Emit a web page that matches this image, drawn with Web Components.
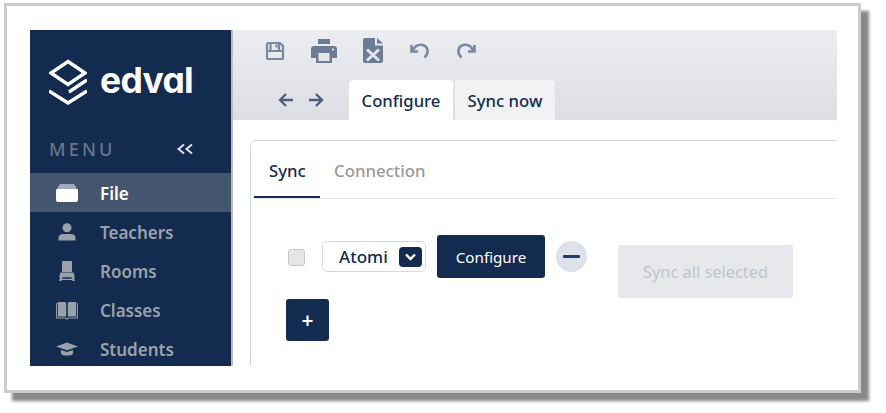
<!DOCTYPE html>
<html><head><meta charset="utf-8">
<style>
html,body{margin:0;padding:0;background:#fff}
body{width:886px;height:413px;overflow:visible;font-family:"Noto Sans","Open Sans",sans-serif;color:#132b4f}
</style></head><body>
<shot-frame>
  <app-sidebar>
    <nav-item active label="File"><svg viewBox="0 0 24 20" width="24" height="20" fill="#fff"><path d="M3 3.600h18v1H3zM4.500 1.400h15v1.200h-15zM1 7.500Q1 5.600 3 5.600h18q2 0 2 1.900v9.500q0 2-2 2H3q-2 0-2-2z"/></svg></nav-item>
    <nav-item label="Teachers"><svg viewBox="0 0 24 20" width="24" height="20" fill="#9aa1ab"><circle cx="12" cy="5.800" r="4.500"/><path d="M3.500 18.500v-2.300q0-4.200 5-4.200h7q5 0 5 4.200v2.300z"/></svg></nav-item>
    <nav-item label="Rooms"><svg viewBox="0 0 24 20" width="24" height="20" fill="#9aa1ab"><path d="M8 0h8q1 0 1 1v10H7V1q0-1 1-1zM5.500 11.500h13l1.500 4.700H4zM5 16h2.600l-1.200 4.500H4zM16.400 16H19l1 4.500h-2.400zM6.500 17.800h11V19h-11z"/></svg></nav-item>
    <nav-item label="Classes"><svg viewBox="0 0 24 20" width="24" height="20" fill="#9aa1ab"><path d="M2.800 2h6.700q1.700 0 1.700 1.500V16.500H2.800zM12.800 3.500Q12.800 2 14.500 2h6.700v14.500h-8.400zM1 3h.9v14.600H10q1 0 2 .7 1-.7 2-.7h8.100V3h.9v15.500H14q-1 0-1.200.9h-1.600q-.2-.9-1.200-.9H1z"/></svg></nav-item>
    <nav-item label="Students"><svg viewBox="0 0 24 20" width="24" height="20" fill="#9aa1ab"><path d="M12 3.500 23 7.500 12 11.300 1 7.500zM6 11l6 2.100 6-2.100v3.200c0 1.500-2.700 2.400-6 2.400s-6-.9-6-2.400z"/></svg></nav-item>
  </app-sidebar>
  <app-main>
    <app-toolbar></app-toolbar>
    <sync-card></sync-card>
  </app-main>
</shot-frame>
<script>
function def(name,html){customElements.define(name,class extends HTMLElement{constructor(){super();this.attachShadow({mode:'open'}).innerHTML=typeof html==='function'?html(this):html;}})}

def('shot-frame',`<style>:host{display:block;padding:3px 0 0 4px}
.frame{box-sizing:border-box;width:857px;height:390px;border:3px solid #ccc;background:#fff;padding:24px 21px 24px 23px;box-shadow:8px 8px 3px 0 #888888}
.app{display:flex;width:807px;height:336px;overflow:hidden}</style><div class="frame"><div class="app"><slot></slot></div></div>`);

def('app-sidebar',`<style>:host{display:block;flex:none;box-sizing:content-box;width:201px;height:336px;background:#132b4f;border-right:2px solid #b9bcc4;font-family:"Noto Sans",sans-serif}
.logo{display:flex;align-items:center;height:103px;padding-left:19px;box-sizing:border-box}
.word{font:700 35.500px/1 Inter,sans-serif;font-feature-settings:"cv11";color:#fff;margin-left:13px;letter-spacing:-.7px;margin-top:-2px}
.menu{display:flex;align-items:center;justify-content:space-between;height:32px;margin-bottom:8px;padding:0 38px 0 19px}
.menu span{font-size:18px;letter-spacing:3.2px;color:#68768c;font-weight:500}
</style>
<div class="logo"><svg width="38" height="46" viewBox="0 0 38 46" fill="none" stroke="#fff" stroke-width="3.400">
<path d="M19 2.500 36 14 19 25.500 2 14z"/><path d="M38 21 20 33M0 32l19 12 19-12"/></svg><span class="word">edval</span></div>
<div class="menu"><span>MENU</span><svg width="16" height="12" viewBox="0 0 16 12" fill="none" stroke="#dfe3e9" stroke-width="2"><path d="M7 1.500 1.500 6 7 10.500M15 1.500 9.500 6l5.500 4.500"/></svg></div>
<slot></slot>`);

def('nav-item',h=>`<style>:host{display:flex;align-items:center;height:39px;padding-left:25px;font-weight:600;font-size:17px;color:#9aa1ab}
:host([active]){background:#44566f;color:#fff}
.i{width:24px;height:20px;margin-right:21px;display:flex}
span{padding-top:2px}
</style><div class="i"><slot></slot></div><span>${h.getAttribute('label')}</span>`);

def('app-main',`<style>:host{display:block;flex:1;min-width:0;background:#fff}</style><slot></slot>`);

const IC='#6d7c95';
def('app-toolbar',`<style>:host{display:flex;flex-direction:column;justify-content:space-between;height:90px;background:linear-gradient(#ecedf1,#dcdee3);box-sizing:border-box}
.top{display:flex;align-items:center;height:41px;padding-left:32px}
.top svg{display:block;flex:none}
.bot{display:flex;align-items:flex-end;height:40px}
.arrows{display:flex;gap:14px;width:116px;padding-left:45px;box-sizing:border-box;align-items:center;align-self:center;flex:none}
.tab{height:40px;display:flex;align-items:center;justify-content:center;border-radius:4px 4px 0 0;font-size:16.700px;font-weight:500;color:#132b4f;box-sizing:border-box}
.a{width:104px;background:#fff;margin-right:2px}.b{width:100px;background:#f0f2f3}
</style>
<div class="top">
<svg style="margin-right:26px" width="20" height="20" viewBox="0 0 20 20" fill="none" stroke="#7a88a0" stroke-width="2.200"><path d="M2 3.500Q2 2 3.500 2H15l3 3v11.500q0 1.500-1.500 1.500h-13Q2 18 2 16.500z"/><path d="M2 10h16M5.500 2v8M14 2v8"/><path d="M11.500 3.500v3"/></svg>
<svg style="margin-right:26px" width="26" height="24" viewBox="0 0 26 24" fill="${IC}"><path d="M7 0h12v5H7zM3 7h20q3 0 3 3v9h-5v5H5v-5H0v-9q0-3 3-3z"/><path fill="#e4e6ea" d="M7.500 14h11v8h-11z"/><circle cx="22" cy="10.500" r="1.100" fill="#e4e6ea"/></svg>
<svg style="margin-right:27px" width="20" height="25" viewBox="0 0 20 25"><path fill="${IC}" d="M2 0h10v7.500h8V23q0 2-2 2H2q-2 0-2-2V2q0-2 2-2zM14 0l6 5.500h-6z"/><path stroke="#e4e6ea" stroke-width="3" d="M4 11.500l12 11M16 11.500l-12 11" fill="none"/></svg>
<svg style="margin-right:26px" width="20" height="16" viewBox="0 0 20 16" fill="none" stroke="#7a88a0" stroke-width="2.600"><path d="M1.500 2v6.500H8M2.500 7.500C5 3 9 1 13 2c5 1.500 6.500 8 1.500 12.500"/></svg>
<svg width="20" height="16" viewBox="0 0 20 16" fill="none" stroke="#7a88a0" stroke-width="2.600"><path d="M18.500 2v6.500H12M17.500 7.500C15 3 11 1 7 2 2 3.500.5 10 5.500 14.500"/></svg>
</div>
<div class="bot"><div class="arrows">
<svg width="16" height="16" viewBox="0 0 16 16" fill="none" stroke="#4c5e7b" stroke-width="2.300"><path d="M15 8H2M8 2 2 8l6 6"/></svg>
<svg width="16" height="16" viewBox="0 0 16 16" fill="none" stroke="#4c5e7b" stroke-width="2.300"><path d="M1 8h13M8 2l6 6-6 6"/></svg>
</div><div class="tab a">Configure</div><div class="tab b">Sync now</div></div>`);

def('sync-card',`<style>:host{display:block;box-sizing:border-box;margin:20px -20px 0 17px;height:260px;border:1px solid #d5d8e0;border-radius:5px;padding:0 0 0 3px}
.tabs{display:flex;height:57px;border-bottom:1px solid #e7e9ee;font-size:16.800px;font-weight:500}
.t{display:flex;align-items:center;padding:4px 15px 0;margin-bottom:-1px;height:57px;box-sizing:border-box;border-bottom:2px solid transparent;color:#999}
.t.on{color:#132b4f;border-bottom-color:#132b4f;width:66px}
.body{padding:36px 0 0 32px}
.row{display:flex;align-items:flex-start;padding-left:2px}
.cb{width:17px;height:17px;box-sizing:border-box;background:#e6e6e6;border:1px solid #c8c8c8;border-radius:3px;margin:14px 17px 0 0;flex:none}
.sel{width:104px;height:31px;box-sizing:border-box;border:1px solid #d4d8e0;border-radius:5px;margin-top:6px;display:flex;align-items:center;padding-left:16px;font-size:17px;font-weight:500;color:#132b4f;flex:none}
.sel i{width:23px;height:20px;background:#132b4f;border-radius:4px;margin-left:auto;margin-right:3px;display:flex;align-items:center;justify-content:center}
.btn{background:#132b4f;color:#fff;border-radius:3px;display:flex;align-items:center;justify-content:center;flex:none}
.cfg{width:108px;height:43px;margin-left:11px;font-size:15.200px}
.minus{width:31px;height:31px;border-radius:50%;background:#dde1ea;margin:6px 0 0 11px;display:flex;align-items:center;justify-content:center;flex:none}
.minus b{width:17px;height:3px;background:#1d3c6c;border-radius:1px;display:block}
.all{width:175px;height:53px;background:#e6e8eb;color:#c0c5cc;margin:10px 0 0 31px;border-radius:3px;display:flex;align-items:center;justify-content:center;font-size:16.400px;flex:none}
.plus{width:43px;height:42px;margin:1px 0 0 0;font-size:21px;font-weight:600}
</style>
<div class="tabs"><div class="t on">Sync</div><div class="t" style="padding-left:14px">Connection</div></div>
<div class="body"><div class="row"><div class="cb"></div><div class="sel">Atomi<i><svg width="11" height="8" viewBox="0 0 11 8" fill="none" stroke="#fff" stroke-width="2.400"><path d="M1 1.500 5.500 6 10 1.500"/></svg></i></div><div class="btn cfg">Configure</div><div class="minus"><b></b></div><div class="all">Sync all selected</div></div>
<div class="btn plus">+</div></div>`);
</script></body></html>
